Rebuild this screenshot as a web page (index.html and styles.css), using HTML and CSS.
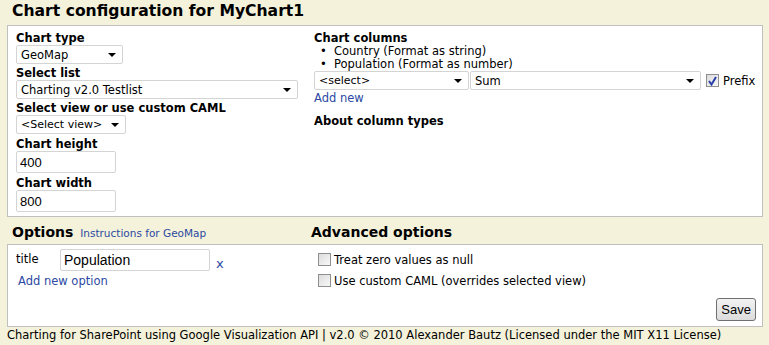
FILE: index.html
```html
<!DOCTYPE html>
<html lang="en">
<head>
  <meta charset="UTF-8" />
  <title>Chart configuration</title>
  <link rel="stylesheet" href="styles.css">
</head>
<body>

<!-- Chart configuration -->
<h2 class="band">Chart configuration for MyChart1</h2>
<div class="box config">
  <div class="col left">
    <label>Chart type</label>
    <div class="select" style="width: 107px">GeoMap <span class="arrow"></span></div>
    <label>Select list</label>
    <div class="select" style="width: 282px">Charting v2.0 Testlist <span class="arrow"></span></div>
    <label>Select view or use custom CAML</label>
    <div class="select small" style="width: 110px">&lt;Select view&gt; <span class="arrow"></span></div>
    <label class="gap">Chart height</label>
    <input type="text" value="400" />
    <label class="gap">Chart width</label>
    <input type="text" value="800" />
  </div>
  <div class="col right">
    <label>Chart columns</label>
    <ul class="columns">
      <li>Country (Format as string)</li>
      <li>Population (Format as number)</li>
    </ul>
    <div class="row">
      <div class="select small" style="width: 155px">&lt;select&gt; <span class="arrow"></span></div>
      <div class="select" style="width: 231px">Sum <span class="arrow"></span></div>
      <span class="check checked"><svg width="9" height="10" viewBox="0 0 9 10"><path d="M1 5 L3.5 8.5 L8 1" fill="none" stroke="#2c3fa8" stroke-width="2"/></svg></span>
      <span class="prefix">Prefix</span>
    </div>
    <a class="link">Add new</a>
    <label class="about">About column types</label>
  </div>
</div>

<!-- Options -->
<div class="band split">
  <h2>Options <a class="link tiny">Instructions for GeoMap</a></h2>
  <h2>Advanced options</h2>
</div>
<div class="box options">
  <div class="col left">
    <div class="option">
      <span class="name">title</span>
      <input type="text" class="wide" value="Population" />
      <a class="link x">x</a>
    </div>
    <a class="link addopt">Add new option</a>
  </div>
  <div class="col right adv">
    <div class="checkline"><span class="check"></span> Treat zero values as null</div>
    <div class="checkline"><span class="check"></span> Use custom CAML (overrides selected view)</div>
    <div class="actions"><button>Save</button></div>
  </div>
</div>

<div class="footer">Charting for SharePoint using Google Visualization API | v2.0 &copy; 2010 Alexander Bautz (Licensed under the MIT X11 License)</div>

</body>
</html>
```

FILE: styles.css
```css
body {
  margin: 0;
  padding: 0 6px 0 7px;
  background: #f4f2da;
  font-family: "DejaVu Sans", Verdana, sans-serif;
  font-size: 11.5px;
  color: #000;
}
.band {
  margin: 0;
  height: 25px;
  padding-left: 5px;
  font-size: 15.6px;
  font-weight: bold;
  line-height: 23px;
}
.band.split {
  display: flex;
  height: 26px;
  line-height: 28px;
  padding-top: 1px;
}
.band h2 {
  margin: 0;
  font-size: 14px;
  width: 299px;
}
.band h2 .tiny {
  font-size: 10.5px;
  font-weight: normal;
  margin-left: 2px;
}
.box {
  background: white;
  border: 1px solid #c0c0c0;
  display: flex;
}
.config {
  height: 190px;
}
.options {
  height: 81px;
}
.col.left {
  width: 298px;
  padding-left: 8px;
}
.col.right {
  flex: 1;
}
.config .col {
  padding-top: 5px;
}
label {
  display: block;
  font-weight: bold;
  line-height: 14px;
  margin-top: 2px;
}
label.gap {
  margin-top: 3px;
}
label:first-child {
  margin-top: 0;
}
.select {
  box-sizing: border-box;
  height: 19px;
  border: 1px solid #d4d4d4;
  border-radius: 2px;
  display: flex;
  align-items: center;
  justify-content: space-between;
  padding: 0 6px 0 4px;
  font-size: 11.5px;
}
.select.small {
  font-size: 11px;
}
.arrow {
  width: 0;
  height: 0;
  border-left: 4px solid transparent;
  border-right: 4px solid transparent;
  border-top: 4px solid #000;
}
input {
  box-sizing: border-box;
  width: 100px;
  height: 22px;
  border: 1px solid #d4d4d4;
  border-radius: 2px;
  padding: 0 3px;
  margin: 0;
  font-family: "Liberation Sans", Arial, sans-serif;
  font-size: 13px;
}
.columns {
  margin: 0;
  padding-left: 20px;
  line-height: 13px;
}
.columns li {
  list-style: none;
  position: relative;
}
.columns li::before {
  content: "\2022";
  position: absolute;
  left: -14px;
}
.row {
  display: flex;
  align-items: center;
  gap: 1px;
  margin-top: 0;
}
.check {
  box-sizing: border-box;
  display: inline-flex;
  align-items: center;
  justify-content: center;
  width: 13px;
  height: 13px;
  border: 1px solid #8e8f8f;
  background: linear-gradient(135deg, #dcdcdc, #f8f8f8);
}
.row .check {
  margin-left: 4px;
}
.prefix {
  margin-left: 3px;
}
.link {
  color: #2b49a3;
  cursor: pointer;
}
.right .link {
  display: block;
  margin-top: 1px;
  line-height: 14px;
}
.about {
  margin-top: 9px;
}
.options .col.left {
  padding-top: 4px;
}
.option {
  display: flex;
  align-items: center;
}
.name {
  width: 44px;
  margin-top: -2px;
}
input.wide {
  width: 150px;
  font-size: 14px;
}
.x {
  margin-left: 6px;
  margin-top: 6px;
  font-size: 13px;
}
.addopt {
  display: block;
  margin: 3px 0 0 2px;
}
.adv {
  padding-top: 8px;
  padding-left: 4px;
}
.checkline {
  display: flex;
  align-items: center;
  gap: 3px;
  height: 13px;
  margin-bottom: 8px;
}
.actions {
  display: flex;
  justify-content: flex-end;
  padding-right: 6px;
  margin-top: 11px;
}
button {
  height: 23px;
  padding: 0 4px;
  font-family: "Liberation Sans", Arial, sans-serif;
  font-size: 13px;
  border: 1px solid #707070;
  border-radius: 3px;
  background: linear-gradient(#f2f2f2, #dcdcdc);
}
.footer {
  line-height: 17px;
}
```
